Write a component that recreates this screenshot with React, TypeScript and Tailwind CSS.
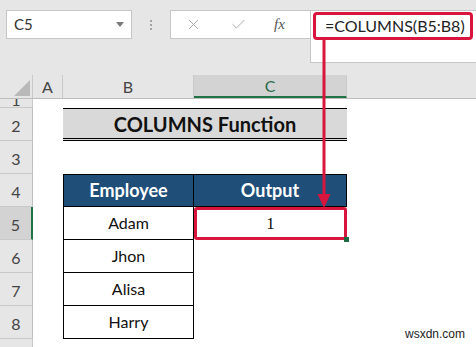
import { X, Check } from "lucide-react";

const font = { fontFamily: "Lato, 'Open Sans', sans-serif" };

function RowHead({ n, selected }: { n: number; selected?: boolean }) {
	return (
		<div
			className={`flex h-full w-[33px] shrink-0 items-center justify-center border-b border-[#c9c9c9] text-[16px] text-[#444] ${
				selected ? "border-r-2 border-r-[#217346] bg-[#d3d3d3]" : "border-r border-r-[#bfbfbf] bg-[#e6e6e6]"
			}`}
		>
			<span className="pt-[4px]">{n}</span>
		</div>
	);
}

function DataRow({ n, name, children }: { n: number; name: string; children?: React.ReactNode }) {
	return (
		<div className="flex h-[33px]">
			<RowHead n={n} selected={n === 5} />
			<div className="w-[30px] shrink-0" />
			<div className="flex w-[131px] shrink-0 items-center justify-center border-x border-b border-black text-[16px] text-[#111]">
				{name}
			</div>
			{children ?? <div className="w-[153px] shrink-0" />}
			<div className="flex-1" />
		</div>
	);
}

export default function App() {
	return (
		<div className="relative h-[347px] w-[476px] overflow-hidden bg-white" style={font}>
			{/* toolbar */}
			<div className="flex h-[75px] items-start bg-[#e6e6e6] pl-[6px] pt-[10px]">
				<div className="flex h-[29px] w-[126px] shrink-0 items-center justify-between border border-[#c6c6c6] bg-white pl-[7px] pr-[7px] text-[15px] text-[#333]">
					<span>C5</span>
					<svg width="8" height="5" viewBox="0 0 8 5">
						<path d="M0 0h8L4 5z" fill="#7a7a7a" />
					</svg>
				</div>
				<div className="flex h-[29px] w-[38px] shrink-0 flex-col items-center justify-center gap-[2px]">
					<div className="h-[2px] w-[2px] bg-[#a3a3a3]" />
					<div className="h-[2px] w-[2px] bg-[#a3a3a3]" />
					<div className="h-[2px] w-[2px] bg-[#a3a3a3]" />
				</div>
				<div className="flex h-[29px] w-[140px] shrink-0 items-center border border-r-0 border-[#c6c6c6] bg-white">
					<X size={17} strokeWidth={1.4} color="#a8a8a8" className="ml-[14px]" />
					<Check size={17} strokeWidth={1.4} color="#a8a8a8" className="ml-[28px]" />
					<span className="ml-[27px] text-[15px] italic text-[#555]" style={{ fontFamily: "'Liberation Serif', serif" }}>
						fx
					</span>
				</div>
				<div className="h-[53px] flex-1 border border-r-0 border-[#c6c6c6] bg-white pl-[2px] pt-[1px]">
					<div className="flex h-[28px] w-[160px] items-center rounded-[4px] border-[3px] border-[#d8163d] pl-[9px] text-[16px] text-[#222]">
						=COLUMNS(B5:B8)
					</div>
				</div>
			</div>

			{/* column headers */}
			<div className="flex h-[24px] border-b border-[#bdbdbd] bg-[#e6e6e6] text-[16px] text-[#444]">
				<div className="relative w-[33px] shrink-0 border-r border-[#c9c9c9]">
					<svg className="absolute left-[14px] top-[5px]" width="16" height="16" viewBox="0 0 16 16">
						<path d="M16 0v16H0z" fill="#b9b9b9" />
					</svg>
				</div>
				<div className="flex w-[30px] shrink-0 items-center justify-center border-r border-[#c9c9c9]">A</div>
				<div className="flex w-[131px] shrink-0 items-center justify-center border-r border-[#c9c9c9]">B</div>
				<div className="flex w-[153px] shrink-0 items-center justify-center border-b-2 border-r border-b-[#217346] border-r-[#c9c9c9] bg-[#d3d3d3] text-[#2d6b4a]">
					C
				</div>
				<div className="flex-1" />
			</div>

			{/* row 1 */}
			<div className="flex h-[9px]">
				<div className="flex w-[33px] shrink-0 items-end justify-center overflow-hidden border-b border-r border-[#c9c9c9] bg-[#e6e6e6] text-[16px] leading-[16px] text-[#444]">
					<span className="mb-[-1px]">1</span>
				</div>
			</div>

			{/* row 2 title */}
			<div className="flex h-[33px]">
				<RowHead n={2} />
				<div className="w-[30px] shrink-0" />
				<div className="flex w-[284px] shrink-0 items-center justify-center border-b-[3px] border-t border-double border-black border-t-solid bg-[#d9d9d9] text-[20px] font-bold text-[#111]">
					COLUMNS Function
				</div>
			</div>

			{/* row 3 */}
			<div className="flex h-[33px]">
				<RowHead n={3} />
			</div>

			{/* row 4 header */}
			<div className="flex h-[33px]">
				<RowHead n={4} />
				<div className="w-[30px] shrink-0" />
				<div className="flex w-[131px] shrink-0 items-center justify-center border border-black bg-[#1f4e78] text-[18px] font-bold text-white">
					Employee
				</div>
				<div className="flex w-[153px] shrink-0 items-center justify-center border-y border-r border-black bg-[#1f4e78] text-[18px] font-bold text-white">
					Output
				</div>
			</div>

			<DataRow n={5} name="Adam">
				<div className="relative flex w-[153px] shrink-0 items-center justify-center rounded-[3px] border-[3px] border-[#d8163d] text-[17px] text-[#111]" style={{ fontFamily: "'Liberation Serif', serif" }}>
					1
					<div className="absolute bottom-[-5px] right-[-5px] h-[5px] w-[5px] bg-[#1e6b3f]" />
				</div>
			</DataRow>
			<DataRow n={6} name="Jhon" />
			<DataRow n={7} name="Alisa" />
			<DataRow n={8} name="Harry" />
			<div className="flex h-[20px]">
				<div className="w-[33px] shrink-0 border-r border-[#c9c9c9] bg-[#e6e6e6]" />
			</div>

			{/* arrow */}
			<svg className="absolute left-0 top-0" width="476" height="347">
				<line x1="324" y1="40" x2="324" y2="196" stroke="#d8163d" strokeWidth="3" />
				<path d="M317.5 194h13L324 208z" fill="#d8163d" />
			</svg>

			<div className="absolute bottom-[4px] right-[11px] text-[12px] text-[#222]" style={{ fontFamily: "'Liberation Sans', sans-serif" }}>
				wsxdn.com
			</div>
		</div>
	);
}
